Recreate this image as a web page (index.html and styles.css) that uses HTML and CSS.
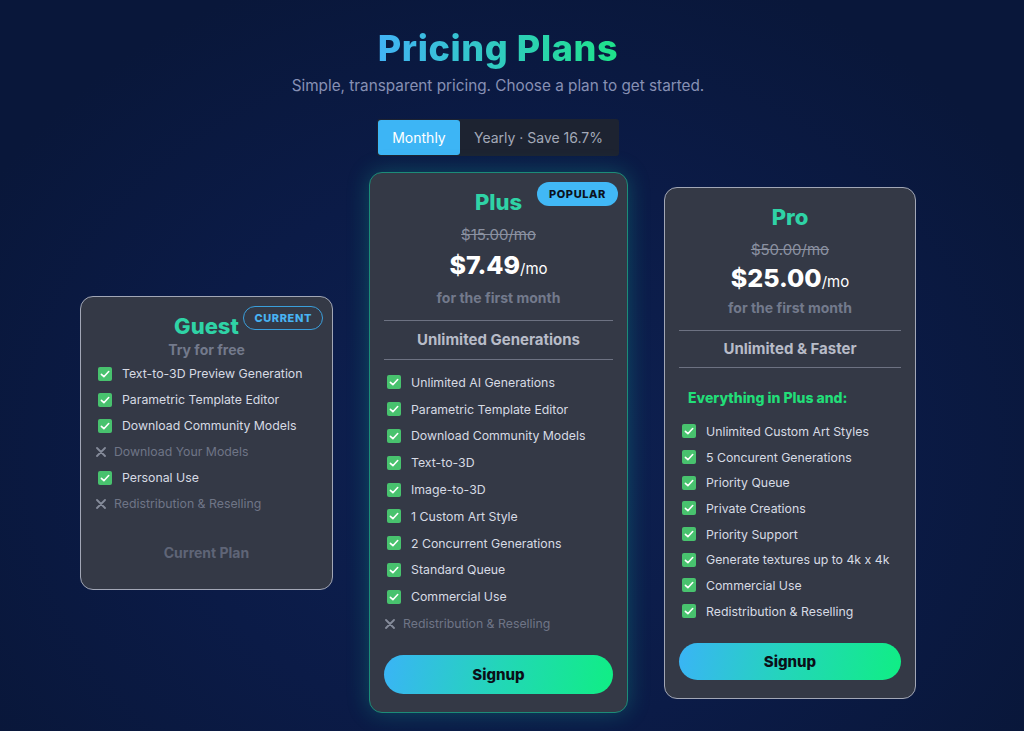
FILE: index.html
```html
<!DOCTYPE html>
<html lang="en">
<head>
  <meta charset="UTF-8">
  <meta name="viewport" content="width=device-width, initial-scale=1.0">
  <title>Pricing Plans</title>
  <link rel="stylesheet" href="styles.css">
</head>
<body>

  <div class="page">
    <h1 class="title">Pricing Plans</h1>
    <p class="subtitle">Simple, transparent pricing. Choose a plan to get started.</p>

    <div class="toggle">
      <a href="#" class="toggle-btn active">Monthly</a>
      <a href="#" class="toggle-btn">Yearly · Save 16.7%</a>
    </div>

    <div class="plans">

      <!-- Guest -->
      <div class="card card-guest">
        <span class="badge badge-current">CURRENT</span>
        <div class="plan-name">Guest</div>
        <div class="plan-note">Try for free</div>
        <ul class="features">
          <li><span class="check"></span>Text-to-3D Preview Generation</li>
          <li><span class="check"></span>Parametric Template Editor</li>
          <li><span class="check"></span>Download Community Models</li>
          <li class="off"><span class="cross"></span>Download Your Models</li>
          <li><span class="check"></span>Personal Use</li>
          <li class="off"><span class="cross"></span>Redistribution &amp; Reselling</li>
        </ul>
        <div class="current-plan">Current Plan</div>
      </div>

      <!-- Plus -->
      <div class="card card-plus">
        <span class="badge badge-popular">POPULAR</span>
        <div class="plan-name">Plus</div>
        <div class="old-price">$15.00/mo</div>
        <div class="price"><b>$7.49</b>/mo</div>
        <div class="plan-note">for the first month</div>
        <div class="plan-label">Unlimited Generations</div>
        <ul class="features">
          <li><span class="check"></span>Unlimited AI Generations</li>
          <li><span class="check"></span>Parametric Template Editor</li>
          <li><span class="check"></span>Download Community Models</li>
          <li><span class="check"></span>Text-to-3D</li>
          <li><span class="check"></span>Image-to-3D</li>
          <li><span class="check"></span>1 Custom Art Style</li>
          <li><span class="check"></span>2 Concurrent Generations</li>
          <li><span class="check"></span>Standard Queue</li>
          <li><span class="check"></span>Commercial Use</li>
          <li class="off"><span class="cross"></span>Redistribution &amp; Reselling</li>
        </ul>
        <a href="#" class="signup">Signup</a>
      </div>

      <!-- Pro -->
      <div class="card card-pro">
        <div class="plan-name">Pro</div>
        <div class="old-price">$50.00/mo</div>
        <div class="price"><b>$25.00</b>/mo</div>
        <div class="plan-note">for the first month</div>
        <div class="plan-label">Unlimited &amp; Faster</div>
        <div class="everything">Everything in Plus and:</div>
        <ul class="features">
          <li><span class="check"></span>Unlimited Custom Art Styles</li>
          <li><span class="check"></span>5 Concurent Generations</li>
          <li><span class="check"></span>Priority Queue</li>
          <li><span class="check"></span>Private Creations</li>
          <li><span class="check"></span>Priority Support</li>
          <li><span class="check"></span>Generate textures up to 4k x 4k</li>
          <li><span class="check"></span>Commercial Use</li>
          <li><span class="check"></span>Redistribution &amp; Reselling</li>
        </ul>
        <a href="#" class="signup">Signup</a>
      </div>

    </div>
  </div>

</body>
</html>
```

FILE: styles.css
```css
body {
  font-family: 'Inter', 'Noto Sans', Arial, sans-serif;
  margin: 0;
  min-height: 731px;
  background: radial-gradient(ellipse 60% 70% at 50% 62%, #0e2152 0%, #0b1b47 55%, #09173a 100%);
  color: #d7dbe4;
}

.page {
  display: flex;
  flex-direction: column;
  align-items: center;
  padding: 26px 28px 0 0;
}

.title {
  margin: 0;
  font-size: 36px;
  line-height: 44px;
  font-weight: 800;
  letter-spacing: 0.6px;
  background: linear-gradient(90deg, #42b3f6, #1ee389);
  -webkit-background-clip: text;
  background-clip: text;
  color: transparent;
}

.subtitle {
  margin: 6px 0 0;
  font-size: 15.3px;
  line-height: 20px;
  color: #8790b4;
}

.toggle {
  display: flex;
  margin-top: 23px;
  padding: 1px;
  background-color: #1d2331;
  border-radius: 3px;
}

.toggle-btn {
  text-decoration: none;
  color: #a3a9b8;
  font-size: 14px;
  line-height: 35px;
  padding: 0 15px 0 14px;
  border-radius: 3px;
}

.toggle-btn.active {
  background-color: #3db5f5;
  color: #fff;
  width: 82px;
  padding: 0;
  text-align: center;
}

.plans {
  display: flex;
  align-items: center;
  gap: 36px;
  margin-top: 16px;
}

.card {
  position: relative;
  box-sizing: border-box;
  display: flex;
  flex-direction: column;
  align-items: center;
  padding: 15px 14px 18px;
  background-color: #343946;
  border: 1px solid #a2a7b6;
  border-radius: 13px;
}

.card-guest { width: 253px; height: 294px; }

.card-plus {
  width: 259px;
  height: 541px;
  border-color: #1c8c78;
  box-shadow: 0 0 22px rgba(24, 200, 160, 0.28);
}

.card-pro { width: 252px; height: 512px; }

.badge {
  position: absolute;
  top: 9px;
  right: 9px;
  font-size: 11px;
  font-weight: 800;
  letter-spacing: 0.6px;
  line-height: 22px;
  border-radius: 12px;
}

.badge-current {
  color: #48b3f3;
  border: 1px solid #3a9fdc;
  padding: 0 10px;
}

.badge-popular {
  color: #0b1120;
  background-color: #41b8f6;
  padding: 1px 12px;
}

.plan-name {
  font-size: 22px;
  line-height: 28px;
  font-weight: 800;
  color: #2fd3a6;
}

.old-price {
  margin-top: 9px;
  font-size: 15px;
  line-height: 20px;
  color: #8b91a1;
  text-decoration: line-through;
}

.price {
  margin-top: 5px;
  font-size: 15px;
  line-height: 30px;
  color: #fff;
}

.price b { font-size: 25px; font-weight: 800; }

.plan-note {
  margin-top: 4px;
  font-size: 14px;
  line-height: 20px;
  font-weight: 700;
  color: #737a8c;
}

.plan-label {
  align-self: stretch;
  margin-top: 12px;
  padding: 9px 0;
  border-top: 1px solid #6d7282;
  border-bottom: 1px solid #6d7282;
  text-align: center;
  font-size: 15px;
  line-height: 20px;
  font-weight: 700;
  color: #b8bcc8;
}

.card-pro .price { margin-top: 3px; }
.card-pro .plan-note { margin-top: 1px; }
.card-pro .plan-label { margin-top: 12px; padding: 8px 0; }

.everything {
  align-self: stretch;
  margin-top: 20px;
  padding-left: 9px;
  font-size: 14px;
  line-height: 20px;
  font-weight: 800;
  color: #22de78;
}

.features {
  align-self: stretch;
  list-style: none;
  margin: 9px 0 0;
  padding: 0 0 0 3px;
}

.features li {
  display: flex;
  align-items: center;
  height: 26px;
  font-size: 12.3px;
  color: #d7dbe4;
}

.card-plus .features li { height: 26.8px; }
.card-pro .features { margin-top: 11px; }
.card-pro .features li { height: 25.7px; }
.card-guest .plan-note { margin-top: 0; }
.card-guest .features { margin-top: 1px; }

.features li.off {
  color: #6f7586;
  margin-left: -2px;
}

.check {
  flex: none;
  width: 14px;
  height: 14px;
  margin-right: 10px;
  border-radius: 2px;
  background: #48c26e url("data:image/svg+xml,%3Csvg xmlns='http://www.w3.org/2000/svg' viewBox='0 0 14 14'%3E%3Cpath d='M3.4 7.3l2.5 2.4 4.8-5.2' fill='none' stroke='%23fff' stroke-width='1.6' stroke-linecap='round' stroke-linejoin='round'/%3E%3C/svg%3E") center / 14px 14px no-repeat;
}

.cross {
  flex: none;
  width: 10px;
  height: 10px;
  margin-right: 8px;
  background: url("data:image/svg+xml,%3Csvg xmlns='http://www.w3.org/2000/svg' viewBox='0 0 10 10'%3E%3Cpath d='M1 1l8 8M9 1l-8 8' stroke='%23858b9a' stroke-width='1.8' stroke-linecap='round'/%3E%3C/svg%3E") center / 10px 10px no-repeat;
}

.current-plan {
  margin-top: 26px;
  font-size: 14px;
  line-height: 20px;
  font-weight: 700;
  color: #5f6577;
}

.signup {
  align-self: stretch;
  margin-top: auto;
  display: block;
  text-align: center;
  text-decoration: none;
  font-size: 15px;
  font-weight: 800;
  line-height: 39px;
  color: #0b0f18;
  border-radius: 20px;
  background: linear-gradient(100deg, #3ab4f6 0%, #23d6b8 50%, #10ee84 100%);
}

.card-pro .signup { line-height: 37px; }
```
